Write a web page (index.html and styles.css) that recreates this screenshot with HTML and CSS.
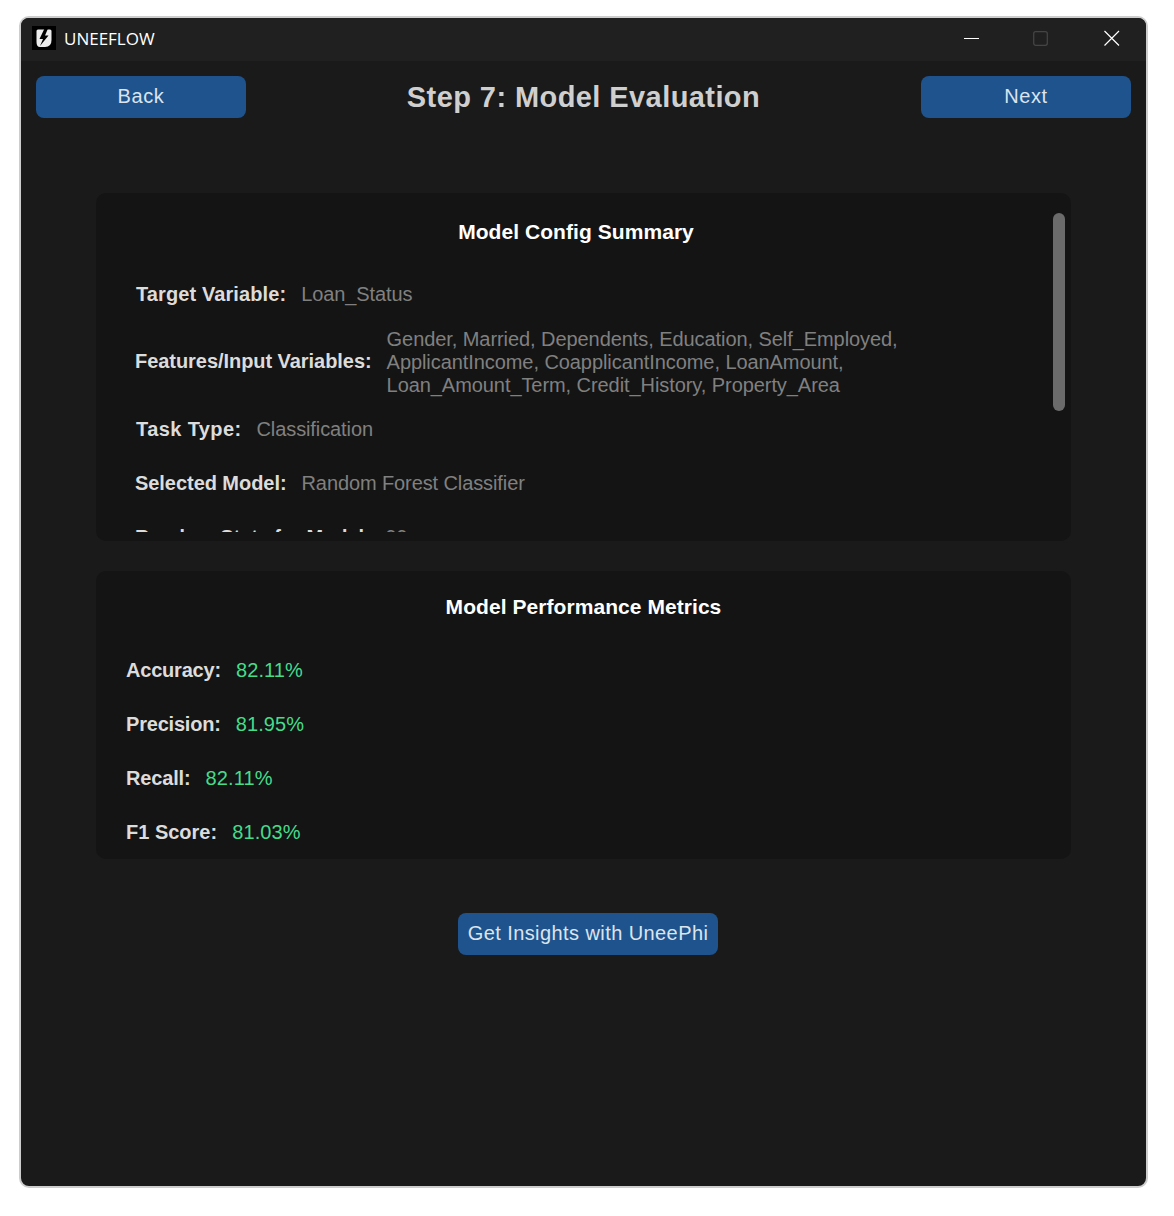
FILE: index.html
```html
<!DOCTYPE html>
<html lang="en">
<head>
<meta charset="utf-8">
<title>UNEEFLOW</title>
<link rel="stylesheet" href="styles.css">
</head>
<body>
<div class="window">
  <div class="titlebar">
    <svg class="logo" width="24" height="24" viewBox="0 0 24 24">
      <rect width="24" height="24" fill="#000"/>
      <path d="M6 3.500 H18 Q19.500 3.500 19.500 5 V14 Q19.500 21 13 21 H8 Q4.500 21 4.500 16 V5 Q4.500 3.500 6 3.500 Z" fill="#ececec"/>
      <path d="M13 1.500 L7.500 13 H11 L8 20 L16.500 9.500 H13 L16 2.500 Z" fill="#000"/>
    </svg>
    <span class="app-name">UNEEFLOW</span>
    <div class="win-controls">
      <svg class="win-icon" width="16" height="16" viewBox="0 0 16 16"><path d="M0 8.500 H15" stroke="#fff" stroke-width="1" fill="none"/></svg>
      <svg class="win-icon" width="16" height="16" viewBox="0 0 16 16"><rect x="0.700" y="1.700" width="13.600" height="13.600" rx="2" stroke="#444" stroke-width="1.300" fill="none"/></svg>
      <svg class="win-icon win-close" width="16" height="16" viewBox="0 0 16 16"><path d="M0.500 1 L15 15.500 M15 1 L0.500 15.500" stroke="#fff" stroke-width="1.200" fill="none"/></svg>
    </div>
  </div>
  <div class="content">
    <header class="step-header">
      <button class="btn nav-btn">Back</button>
      <h1 class="step-title">Step 7: Model Evaluation</h1>
      <button class="btn nav-btn">Next</button>
    </header>

    <section class="panel config-panel">
      <div class="config-scroll">
        <h2 class="panel-title">Model Config Summary</h2>
        <div class="row"><span class="label label-target">Target Variable:</span><span class="value">Loan_Status</span></div>
        <div class="row row-features"><span class="label label-tight">Features/Input Variables:</span><span class="value value-wrap">Gender, Married, Dependents, Education, Self_Employed,<br>ApplicantIncome, CoapplicantIncome, LoanAmount,<br>Loan_Amount_Term, Credit_History, Property_Area</span></div>
        <div class="row"><span class="label label-task">Task Type:</span><span class="value">Classification</span></div>
        <div class="row"><span class="label label-tight">Selected Model:</span><span class="value">Random Forest Classifier</span></div>
        <div class="row"><span class="label label-tight">Random State for Model:</span><span class="value">99</span></div>
      </div>
      <div class="scrollbar"></div>
    </section>

    <section class="panel metrics-panel">
      <h2 class="panel-title">Model Performance Metrics</h2>
      <div class="row"><span class="label label-metric">Accuracy:</span><span class="value metric">82.11%</span></div>
      <div class="row"><span class="label label-metric">Precision:</span><span class="value metric">81.95%</span></div>
      <div class="row"><span class="label label-recall">Recall:</span><span class="value metric">82.11%</span></div>
      <div class="row"><span class="label">F1 Score:</span><span class="value metric">81.03%</span></div>
    </section>

    <div class="insights-wrap"><button class="btn insights-btn">Get Insights with UneePhi</button></div>
  </div>
</div>
</body>
</html>
```
FILE: styles.css
```css
* { box-sizing: border-box; }
html, body { margin: 0; padding: 0; background: #fff; }
body { padding: 16px 0 0 19px; font-family: "Liberation Sans", Arial, sans-serif; }

.window {
  width: 1129px;
  height: 1172px;
  border: 2px solid #cdcdcd;
  border-radius: 10px;
  background: #1a1a1a;
  overflow: hidden;
}

.titlebar {
  display: flex;
  align-items: center;
  height: 43px;
  padding: 0 0 3px 11px;
  background: #202020;
}
.logo { flex: none; filter: blur(0.4px); }
.app-name {
  margin-left: 8px;
  font-family: "Open Sans", sans-serif;
  font-size: 17px;
  color: #fff;
}
.win-controls {
  margin-left: auto;
  display: flex;
  gap: 53px;
  padding-right: 26px;
}
.win-icon { display: block; }
.win-close { margin-left: 2px; }

.step-header {
  display: flex;
  align-items: center;
  justify-content: space-between;
  padding: 15px 15px 0;
}
.step-title {
  margin: 0;
  font-size: 29px;
  font-weight: 700;
  color: #cfcfcf;
  letter-spacing: 0.42px;
}

.btn {
  border: 0;
  height: 42px;
  background: #1f538d;
  color: #dce4ee;
  font-family: inherit;
  font-size: 20px;
  padding: 0 0 2px;
}
.nav-btn { width: 210px; border-radius: 8px; letter-spacing: 0.6px; }
.insights-btn { width: 260px; border-radius: 8px; letter-spacing: 0.42px; }

.panel {
  margin: 0 75px;
  background: #141414;
  border-radius: 10px;
}
.config-panel {
  position: relative;
  margin-top: 75px;
  height: 348px;
}
.config-scroll {
  height: 339px;
  overflow: hidden;
  padding: 25px 0 0 39px;
}
.scrollbar {
  position: absolute;
  top: 20px;
  right: 6px;
  width: 12px;
  height: 198px;
  border-radius: 6px;
  background: #6b6b6b;
}
.panel-title {
  margin: 0 0 28px;
  height: 28px;
  line-height: 28px;
  font-size: 21px;
  font-weight: 700;
  color: #fff;
  text-align: center;
  letter-spacing: 0.06px;
}
.config-panel .panel-title { padding-right: 54px; }

.row {
  display: flex;
  align-items: center;
  gap: 15px;
  height: 40px;
  margin-bottom: 14px;
  font-size: 20px;
  line-height: 23px;
  white-space: nowrap;
}
.row-features { height: 67px; }
.label { font-weight: 700; color: #dcdcdc; }
.label-target { margin-left: 1px; letter-spacing: 0.1px; }
.label-task { margin-left: 1px; letter-spacing: 0.4px; }
.label-tight { letter-spacing: -0.05px; }
.label-metric { letter-spacing: -0.2px; }
.label-recall { letter-spacing: -0.15px; }
.value { color: #808080; letter-spacing: -0.1px; }
.value-wrap { padding-top: 2px; letter-spacing: -0.07px; }
.metric { color: #45dc8c; letter-spacing: 0.12px; }

.metrics-panel {
  margin-top: 30px;
  height: 288px;
  padding: 22px 0 0 30px;
  overflow: hidden;
}
.metrics-panel .panel-title { padding-right: 30px; margin-bottom: 29px; }

.insights-wrap {
  display: flex;
  justify-content: center;
  padding-left: 9px;
  margin-top: 54px;
}
```
